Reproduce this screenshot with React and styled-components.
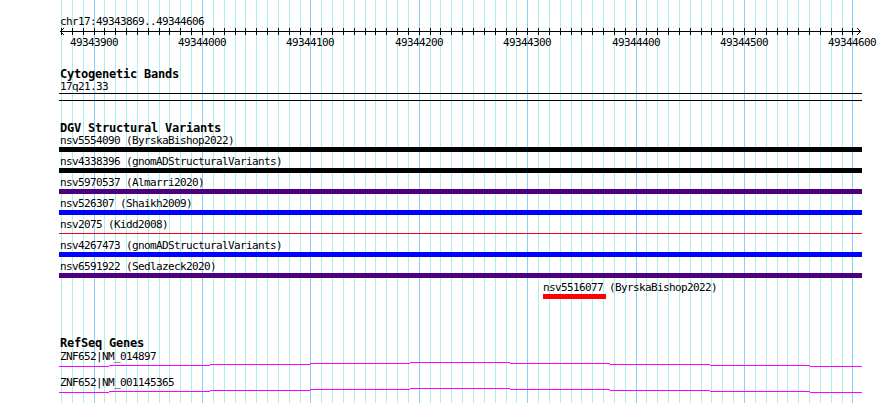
import React from 'react'
import styled, { createGlobalStyle } from 'styled-components'

const START = 49343869
const SCALE = 1.084
const LEFT = 60
const toX = (pos) => Math.round(LEFT + (pos - START) * SCALE)

const gridPositions = []
for (let p = 49343870; p <= 49344600; p += 10) gridPositions.push(p)
const majorPositions = gridPositions.filter((p) => p % 100 === 0)

const variants = [
  { name: 'nsv5554090', study: 'ByrskaBishop2022', color: '#000000' },
  { name: 'nsv4338396', study: 'gnomADStructuralVariants', color: '#000000' },
  { name: 'nsv5970537', study: 'Almarri2020', color: '#4b0082' },
  { name: 'nsv526307', study: 'Shaikh2009', color: '#0000ff' },
  { name: 'nsv2075', study: 'Kidd2008', color: '#ff0000', thin: true },
  { name: 'nsv4267473', study: 'gnomADStructuralVariants', color: '#0000ff' },
  { name: 'nsv6591922', study: 'Sedlazeck2020', color: '#4b0082' },
  { name: 'nsv5516077', study: 'ByrskaBishop2022', color: '#ff0000', left: 483, width: 63 },
]

const genes = ['ZNF652|NM_014897', 'ZNF652|NM_001145365']

// intron "hat" drawn as stepped segments (page x, y offset)
const hatBreaks = [59, 109, 210, 310, 410, 510, 610, 710, 810, 862]
const hatLevels = [4, 3, 2, 1, 0, 1, 2, 3, 4]

const MONO = '"DejaVu Sans Mono", "Liberation Mono", monospace'

const GlobalStyle = createGlobalStyle`
  html, body {
    margin: 0;
    padding: 0;
    background: #ffffff;
  }
`

const Panel = styled.div`
  position: relative;
  width: 890px;
  height: 403px;
  overflow: hidden;
  background: #ffffff;
  color: #000000;
  font-family: ${MONO};
  font-size: 11px;
  letter-spacing: -0.62px;
`

const GridLayer = styled.svg`
  position: absolute;
  top: 0;
  left: 0;
  z-index: 0;
`

const Tracks = styled.div`
  position: relative;
  z-index: 1;
  display: flex;
  flex-direction: column;
  width: 802px;
  padding: 16px 28px 0 60px;
`

const Section = styled.section`
  display: flex;
  flex-direction: column;
  margin-top: ${(p) => p.$gap || 0}px;
`

const Text = styled.div`
  height: ${(p) => p.$h || 13}px;
  line-height: ${(p) => p.$h || 13}px;
  white-space: nowrap;
  padding-top: ${(p) => p.$pad || 0}px;
`

const Title = styled.div`
  height: 12px;
  line-height: 12px;
  font-size: 12px;
  letter-spacing: -0.22px;
  font-weight: bold;
  white-space: nowrap;
`

const Ruler = styled.svg`
  display: block;
  overflow: visible;
`

const BandBox = styled.div`
  margin-left: -1px;
  width: 803px;
  height: 6px;
  border-top: 1px solid #000;
  border-bottom: 1px solid #000;
`

const Row = styled.div`
  display: flex;
  flex-direction: column;
  margin-bottom: 3px;
`

const GlyphArea = styled.div`
  height: 5px;
  display: flex;
  flex-direction: column;
  justify-content: center;
`

const Bar = styled.div`
  height: ${(p) => (p.$thin ? 1 : 5)}px;
  background: ${(p) => p.$color};
`

const Hat = styled.svg`
  display: block;
  margin-left: -1px;
  margin-top: -2px;
`

const ScaleTrack = () => (
  <Section>
    <Text $h={12}>chr17:49343869..49344606</Text>
    <Ruler width="802" height="19">
      <rect x="0" y="3" width="801" height="1" fill="#000" />
      {gridPositions.map((p) => (
        <rect key={p} x={toX(p) - LEFT} y="0" width="1" height="7" fill="#000" />
      ))}
      <polyline points="4,0 0.5,3.5 4,7" fill="none" stroke="#000" strokeWidth="1" />
      <polyline points="797,0 800.5,3.5 797,7" fill="none" stroke="#000" strokeWidth="1" />
      {majorPositions.map((p) => (
        <text
          key={p}
          x={toX(p) - LEFT + 24}
          y="18"
          textAnchor="end"
          fontSize="11"
          letterSpacing="-0.62"
          fontFamily={MONO}
          fill="#000"
        >
          {p}
        </text>
      ))}
    </Ruler>
  </Section>
)

const GeneHat = ({ color }) => (
  <Hat width="803" height="14">
    {hatLevels.map((lvl, i) => (
      <rect
        key={i}
        x={hatBreaks[i] - 59}
        y={lvl + 1}
        width={hatBreaks[i + 1] - hatBreaks[i]}
        height="1"
        fill={color}
      />
    ))}
  </Hat>
)

export default function App() {
  return (
    <>
      <GlobalStyle />
      <Panel>
        <GridLayer width="890" height="403">
          {gridPositions.map((p) => (
            <rect
              key={p}
              x={toX(p)}
              y="0"
              width="1"
              height="403"
              fill={p % 100 === 0 ? '#87cefa' : '#afeeee'}
            />
          ))}
        </GridLayer>
        <Tracks>
          <ScaleTrack />

          <Section $gap={21}>
            <Title>Cytogenetic Bands</Title>
            <Text>17q21.33</Text>
            <BandBox />
          </Section>

          <Section $gap={21}>
            <Title>DGV Structural Variants</Title>
            {variants.map((v) => (
              <Row key={v.name}>
                <Text style={v.left ? { marginLeft: v.left } : undefined}>
                  {v.name} ({v.study})
                </Text>
                <GlyphArea>
                  <Bar
                    $color={v.color}
                    $thin={v.thin}
                    style={
                      v.left
                        ? { marginLeft: v.left, width: v.width }
                        : { marginLeft: -1, width: 803 }
                    }
                  />
                </GlyphArea>
              </Row>
            ))}
          </Section>

          <Section $gap={35}>
            <Title>RefSeq Genes</Title>
            {genes.map((g) => (
              <React.Fragment key={g}>
                <Text $pad={1} $h={13}>{g}</Text>
                <GeneHat color="#ff00ff" />
              </React.Fragment>
            ))}
          </Section>
        </Tracks>
      </Panel>
    </>
  )
}
